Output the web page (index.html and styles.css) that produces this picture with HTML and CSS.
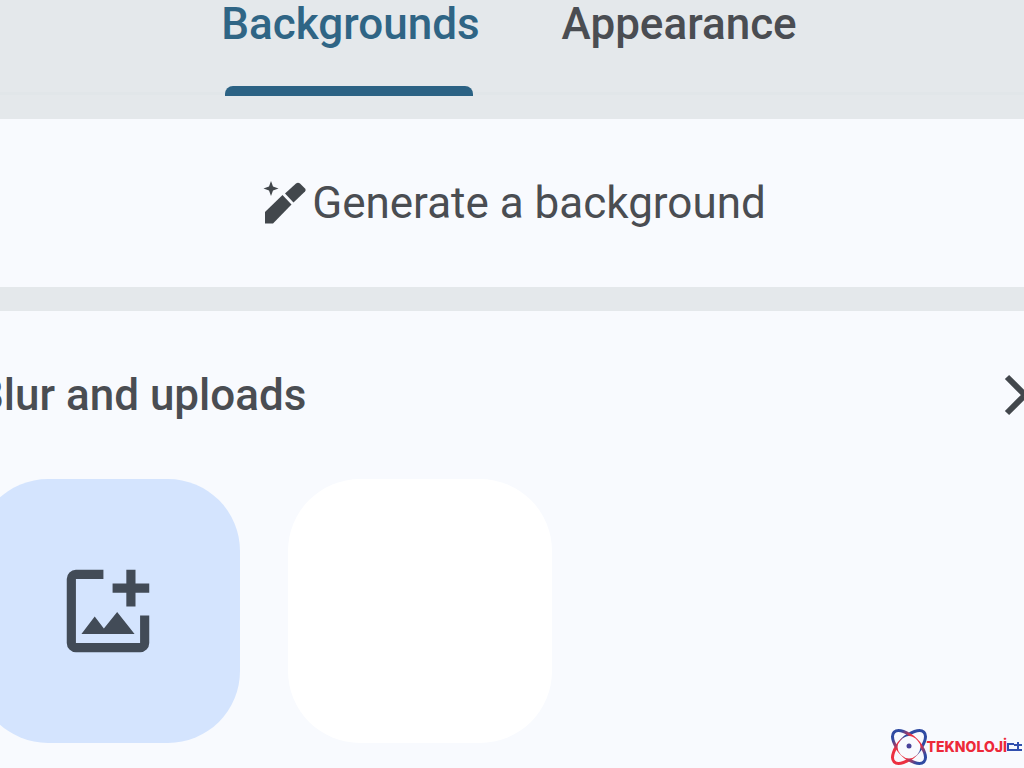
FILE: index.html
```html
<!DOCTYPE html>
<html lang="en">
<head>
<meta charset="utf-8">
<title>Backgrounds</title>
<link rel="stylesheet" href="styles.css">
</head>
<body>
<div class="viewport">
  <main class="panel">
    <header class="tabs" role="tablist">
      <button class="tab tab-active" role="tab" aria-selected="true">Backgrounds</button>
      <button class="tab" role="tab" aria-selected="false">Appearance</button>
    </header>
    <section class="card generate">
      <button class="generate-button">
        <svg class="pen-icon" viewBox="0 0 42 44" aria-hidden="true">
          <path d="M7 0 L9 5.500 L14.500 7.500 L9 9.500 L7 15 L5 9.500 L-.5 7.500 L5 5.500Z"/>
          <path d="M21 12.500 L32 2.500 Q34 1 36 2.500 L41 7.500 Q42.500 9 41 10.500 L29.500 21.500Z"/>
          <path d="M18.500 14 L27.500 23.500 L9 42.500 H1 V31Z"/>
        </svg>
        <span>Generate a background</span>
      </button>
    </section>
    <section class="card uploads">
      <div class="uploads-head">
        <h2 class="uploads-title">Blur and uploads</h2>
        <button class="more" aria-label="Show more">
          <svg class="chevron" viewBox="0 0 26 42" aria-hidden="true"><path d="M3 3 L21 21 L3 39"/></svg>
        </button>
      </div>
      <div class="tiles">
        <button class="tile tile-add" aria-label="Add image">
          <svg class="image-icon" viewBox="0 0 24 24" aria-hidden="true">
            <path d="M5 21q-.825 0-1.412-.587T3 19V5q0-.825.588-1.412T5 3h6v2H5v14h14v-6h2v6q0 .825-.587 1.413T19 21Z"/>
            <path d="M16 11V8h-3V6h3V3h2v3h3v2h-3v3Z"/>
            <path d="M6.200 17 L9.100 13.200 L11.100 15.800 L14 12.200 L17.800 17Z"/>
          </svg>
        </button>
        <button class="tile tile-blank" aria-label="Blank background"></button>
      </div>
    </section>
  </main>
  <div class="watermark">
    <svg class="atom" viewBox="0 0 36 38" aria-hidden="true">
      <defs>
        <linearGradient id="rising" x1="0" y1="0" x2="1" y2="0">
          <stop offset=".4" stop-color="#ec3141"/>
          <stop offset=".6" stop-color="#2f4ba2"/>
        </linearGradient>
        <linearGradient id="falling" gradientUnits="userSpaceOnUse" x1="-21" y1="0" x2="21" y2="0">
          <stop offset=".1" stop-color="#2f4ba2"/>
          <stop offset=".35" stop-color="#ec3141"/>
          <stop offset=".65" stop-color="#ec3141"/>
          <stop offset=".9" stop-color="#2f4ba2"/>
        </linearGradient>
      </defs>
      <ellipse rx="21" ry="10" transform="translate(18 19) rotate(-45)" stroke="url(#rising)"/>
      <ellipse rx="21" ry="10" transform="translate(18 19) rotate(45)" stroke="url(#falling)"/>
      <path class="atom-core" d="M10 12 Q18 4 26 12 Q33 19 26 27 Q18 34 10 27 Q3 19 10 12Z"/>
      <circle class="dot" cx="18" cy="18" r="2.500"/>
    </svg>
    <span class="brand">TEKNOLOJİ</span>
    <svg class="brand-mark" viewBox="0 0 15 10" role="img" aria-label="ct"><path d="M7 2 H1 V8 H7 M11 0 V8 M7 3 H15 M7 8 H15"/></svg>
  </div>
</div>
</body>
</html>
```
FILE: styles.css
```css
* { box-sizing: border-box; }
body {
  margin: 0;
  background: #f8fafe;
  color: #4a4d52;
  font-family: Roboto, "Liberation Sans", sans-serif;
}
button {
  margin: 0;
  padding: 0;
  border: 0;
  background: none;
  color: inherit;
  font: inherit;
}
.viewport {
  position: relative;
  min-height: 100vh;
  overflow: hidden;
}
/* The panel runs past both edges of the window. */
.panel {
  display: flex;
  flex-direction: column;
  gap: 24px;
  margin: 0 -30px 0 -24px;
  background: #e4e8eb;
}
.tabs {
  display: flex;
  justify-content: center;
  gap: 82px;
  height: 95px;
  padding-right: 12px;
  border-bottom: 3px solid #e1e6e9;
}
.tab {
  position: relative;
  padding-bottom: 44px;
  font-size: 44px;
  line-height: 48px;
  font-weight: 500;
}
.tab-active { color: #2f6585; }
.tab-active::after {
  content: "";
  position: absolute;
  left: 4px;
  right: 7px;
  bottom: -4px;
  height: 10px;
  border-radius: 8px 8px 0 0;
  background: #2b6284;
}
.card { background: #f8fafe; }
.generate {
  display: flex;
  justify-content: center;
  padding: 56px 0;
}
.generate-button {
  display: flex;
  align-items: center;
  gap: 6px;
  font-size: 44px;
  line-height: 56px;
}
.pen-icon { width: 42px; height: 44px; fill: #42474c; overflow: visible; }
.uploads { padding-top: 56px; padding-bottom: 26px; }
.uploads-head {
  display: flex;
  align-items: center;
  justify-content: space-between;
  padding-right: 24px;
}
.uploads-title {
  margin: 0;
  font-size: 44px;
  line-height: 56px;
  font-weight: 500;
}
.more { display: flex; }
.chevron {
  width: 26px;
  height: 42px;
  fill: none;
  stroke: #42474c;
  stroke-width: 6;
}
.tiles { display: flex; gap: 48px; margin-top: 56px; }
.tile {
  display: flex;
  align-items: center;
  justify-content: center;
  width: 264px;
  height: 264px;
  border-radius: 72px;
}
.tile-add { background: #d4e4fe; }
.tile-blank { background: #fff; }
.image-icon { width: 110px; height: 110px; fill: #424b57; }
.watermark {
  position: absolute;
  right: 2px;
  bottom: 3px;
  display: flex;
  align-items: center;
}
.atom { width: 36px; height: 38px; fill: none; stroke-width: 3; }
.atom-core { fill: #f8fafe; }
.dot { fill: #49439a; }
.brand {
  color: #ed2939;
  font-family: Inter, "Open Sans", sans-serif;
  font-size: 14px;
  line-height: 20px;
  font-weight: 800;
}
.brand-mark {
  width: 15px;
  height: 10px;
  fill: none;
  stroke: #304fae;
  stroke-width: 2;
}
```
